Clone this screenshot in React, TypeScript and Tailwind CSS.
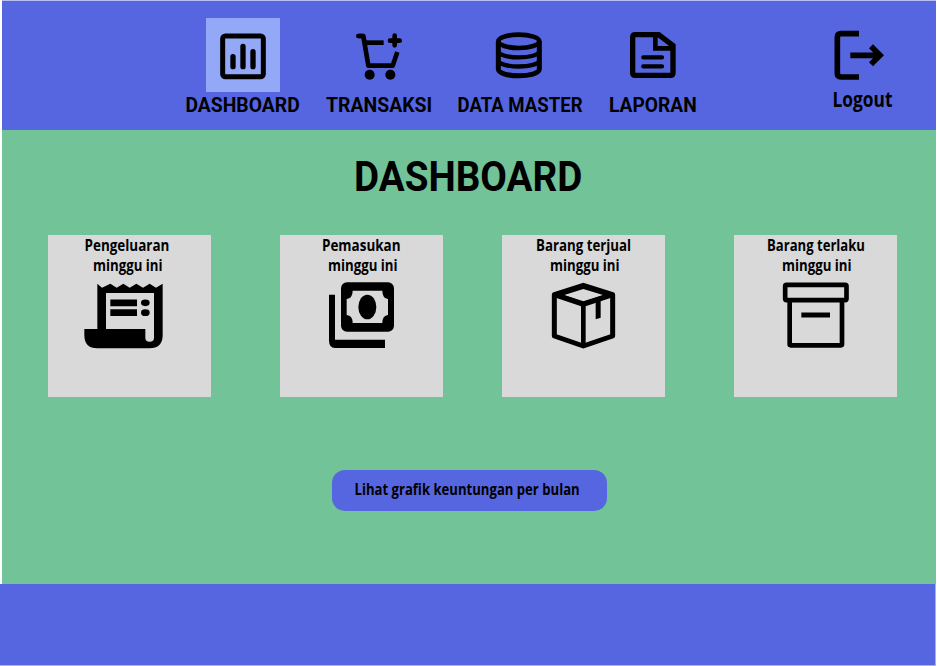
import { useLayoutEffect, useRef, useState, type ReactNode } from "react";

/* Condensed label: the text is squeezed horizontally to the given width. */
function Label({ text, width, className = "" }: { text: string; width: number; className?: string }) {
  const ref = useRef<HTMLSpanElement>(null);
  const [scale, setScale] = useState(1);
  useLayoutEffect(() => {
    if (ref.current) setScale(width / ref.current.offsetWidth);
  }, [width, text]);
  return (
    <span className={`flex justify-center whitespace-nowrap ${className}`} style={{ width }}>
      <span ref={ref} className="shrink-0" style={{ transform: `scaleX(${scale})` }}>
        {text}
      </span>
    </span>
  );
}

const caps = "font-['Roboto',sans-serif] font-bold";
const mixed = "font-['Open_Sans',sans-serif] font-bold";

function NavItem({ label, width, box, active, children }: { label: string; width: number; box: string; active?: boolean; children: ReactNode }) {
  return (
    <a className="flex flex-col items-center">
      <svg viewBox={box} className={`h-[74px] w-[74px] ${active ? "bg-[#93a8f7]" : ""}`} fill="none" stroke="#000">
        {children}
      </svg>
      <Label text={label} width={width} className={`${caps} text-[20.5px] leading-[27px]`} />
    </a>
  );
}

function Card({ title, width, shift = "", children }: { title: string; width: number; shift?: string; children: ReactNode }) {
  return (
    <section className="flex h-[162px] w-[163px] flex-col items-center bg-[#d9d9d9]">
      <div className={`flex flex-col items-center ${shift}`}>
        <Label text={title} width={width} className={`${mixed} text-[15.5px] leading-[20px]`} />
        <Label text="minggu ini" width={70} className={`${mixed} ml-[3px] text-[15.5px] leading-[20px]`} />
      </div>
      <svg viewBox="24 150 489 366" className="h-[122px] w-[163px]" fill="none" stroke="#000">
        {children}
      </svg>
    </section>
  );
}

export default function App() {
  return (
    <div className="flex h-[666px] w-[937px] flex-col overflow-hidden bg-white text-black">
      <header className="ml-[2px] flex h-[130px] w-[934px] items-start border-t border-[#b9bff2] bg-[#5665e0] pt-[17px] pl-[184px]">
        <nav className="flex gap-[26px]">
          <NavItem label="DASHBOARD" width={114} box="78 54 222 222" active>
            <rect x="128" y="108" width="122" height="122" rx="8" strokeWidth="15" />
            <path d="M159 170v30M189 139v61M219 155v45" strokeWidth="16" strokeLinecap="round" />
          </NavItem>
          <NavItem label="TRANSAKSI" width={106} box="486 54 222 222">
            <path d="M535 108H550L565 197H638L652 156" strokeWidth="14" strokeLinejoin="round" />
            <path d="M535 108H549" strokeWidth="14" strokeLinecap="round" />
            <path d="M556 128H611" strokeWidth="14" />
            <path d="M644 107v29M630 122h29" strokeWidth="14" strokeLinecap="round" />
            <circle cx="569" cy="224" r="15" fill="#000" stroke="none" />
            <circle cx="631" cy="224" r="15" fill="#000" stroke="none" />
          </NavItem>
          <NavItem label="DATA MASTER" width={125} box="132 54 222 222">
            <ellipse cx="236.500" cy="124" rx="61.500" ry="20" strokeWidth="14" />
            <path d="M175 124V207C175 234 298 234 298 207V124" strokeWidth="15" />
            <path d="M175 152C175 179 298 179 298 152M175 180C175 206 298 206 298 180" strokeWidth="13" />
          </NavItem>
          <NavItem label="LAPORAN" width={88} box="528 54 222 222">
            <path d="M586 104H656L699 137V218Q699 226 691 226H586Q578 226 578 218V112Q578 104 586 104Z" strokeWidth="16" />
            <path d="M646 104V145H699" strokeWidth="14" />
            <path d="M610 172h56M610 199h56" strokeWidth="13" strokeLinecap="round" />
          </NavItem>
        </nav>
        <a className="ml-[128px] flex flex-col items-center">
          <svg viewBox="74 54 222 204" className="h-[68px] w-[74px]" fill="none" stroke="#000">
            <path d="M176 101H122Q111 101 111 112V220Q111 231 122 231H176" strokeWidth="17" />
            <path d="M150 166H236M212 139L239 166L212 193" strokeWidth="17" />
          </svg>
          <Label text="Logout" width={60} className={`${mixed} text-[20.5px] leading-[26px]`} />
        </a>
      </header>

      <main className="ml-[2px] flex h-[454px] w-[934px] flex-col items-start bg-[#72c398]">
        <h1 className="ml-[352px] pt-[23px]">
          <Label text="DASHBOARD" width={228} className={`${caps} text-[42px] leading-[48px]`} />
        </h1>
        <div className="mt-[34px] ml-[46px] flex">
          <Card title="Pengeluaran" width={85} shift="-translate-x-[3px]">
            <path d="M172 176L186 188L211 176L230 188L250 176L269 188L289 176L309 188L329 176L348 188L368 176V331Q368 370 328 370H172Q133 370 133 331V312H172Z" fill="#000" stroke="none" />
            <path d="M198 204H342V339Q342 350 329 350Q316 350 316 339V312H198Z" fill="#d9d9d9" stroke="none" />
            <path d="M211 233.500h80M211 263h80" strokeWidth="20" />
            <ellipse cx="316" cy="233.500" rx="13" ry="10" fill="#000" stroke="none" />
            <ellipse cx="316" cy="263" rx="13" ry="10" fill="#000" stroke="none" />
          </Card>
          <div className="w-[69px]" />
          <Card title="Pemasukan" width={79}>
            <rect x="207" y="172" width="159" height="148" rx="18" fill="#000" stroke="none" />
            <path d="M242 197H331Q331 219 348 222V270Q331 272 331 294H242Q242 272 224 270V222Q242 219 242 197Z" fill="#d9d9d9" stroke="none" />
            <ellipse cx="286" cy="246" rx="27" ry="37" fill="#000" stroke="none" />
            <path d="M171 209H189V344H339V369H189Q171 369 171 346Z" fill="#000" stroke="none" />
          </Card>
          <div className="w-[59px]" />
          <Card title="Barang terjual" width={95}>
            <path d="M268 181L356 209V333L268 363L181 333V209Z" strokeWidth="15" strokeLinejoin="round" />
            <path d="M181 209L268 238L356 209" strokeWidth="15" />
            <path d="M181 209L268 181L356 209L268 238ZM211 210L268 229L327 210L268 192Z" fill="#000" fillRule="evenodd" stroke="none" />
            <path d="M268 239V363" strokeWidth="14" />
            <path d="M305 228L320 223V278L305 283Z" fill="#000" stroke="none" />
          </Card>
          <div className="w-[69px]" />
          <Card title="Barang terlaku" width={98}>
            <rect x="177.500" y="179.500" width="184" height="46" rx="4" strokeWidth="14" />
            <path d="M191 226V358Q191 361 194 361H345Q348 361 348 358V226" strokeWidth="14" />
            <path d="M226 270h86" strokeWidth="15" />
          </Card>
        </div>
        <button className="mt-[73px] ml-[330px] flex h-[41px] w-[275px] items-center rounded-[13px] bg-[#5665e0] pb-[4px] pl-[23px]">
          <Label text="Lihat grafik keuntungan per bulan" width={225} className={`${mixed} text-[15.5px] leading-[20px]`} />
        </button>
      </main>

      <footer className="h-[82px] w-[936px] border-r border-b border-[#a8b0ef] bg-[#5665e0]" />
    </div>
  );
}
